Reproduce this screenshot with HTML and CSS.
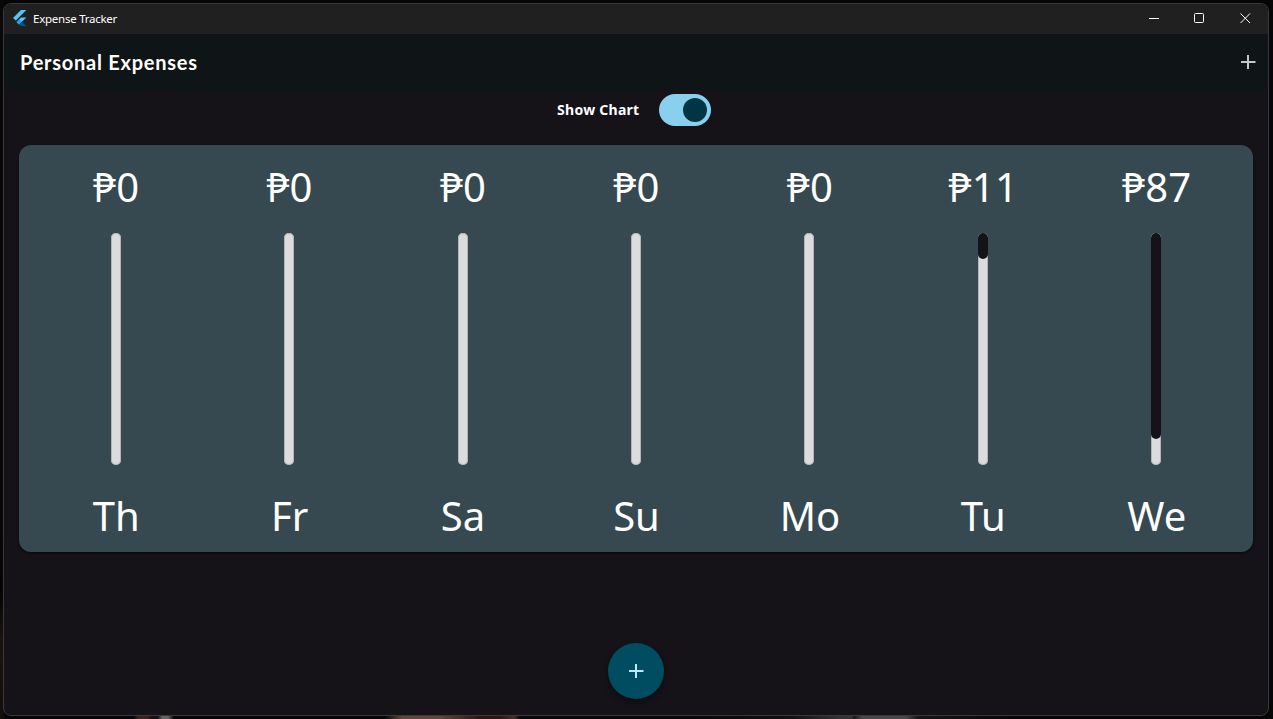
FILE: index.html
```
<!DOCTYPE html>
<html lang="en">
<head>
<meta charset="utf-8">
<title>Expense Tracker</title>
<link rel="stylesheet" href="styles.css">
</head>
<body>
<div class="window">
  <header class="titlebar">
    <svg class="logo" width="14" height="16" viewBox="0 0 14 16">
      <path fill="#54c5f8" d="M8 0h5.4L2.8 10.6 0 8z"/>
      <path fill="#54c5f8" d="M8 7.4h5.4L8.6 12.1 5.9 9.5z"/>
      <path fill="#29a3e8" d="M3.3 12.1l2.7-2.7 2.7 2.7L6 14.8z"/>
      <path fill="#01579b" d="M6 14.8l2.7-2.7 4.7 3.9H8z"/>
    </svg>
    <span class="app-name">Expense Tracker</span>
    <div class="controls">
      <svg width="46" height="30" viewBox="0 0 46 30"><path d="M18 14.5h10" /></svg>
      <svg width="46" height="30" viewBox="0 0 46 30"><rect x="17.5" y="9.5" width="9" height="9" rx="1"/></svg>
      <svg width="45" height="30" viewBox="0 0 45 30"><path d="M17.5 9.5l9.5 9.5M27 9.5l-9.5 9.5"/></svg>
    </div>
  </header>
  <div class="appbar">
    <h1 class="heading">Personal Expenses</h1>
    <svg class="add" width="24" height="24" viewBox="0 0 24 24"><path d="M19.5 13H13v6h-2v-6H5v-2h6V5h2v6h6.5z"/></svg>
  </div>
  <main class="content">
    <div class="toggle-row">
      <span class="toggle-label">Show Chart</span>
      <span class="switch"><span class="thumb"></span></span>
    </div>
    <section class="chart">
      <div class="day"><span class="amount">₱0</span><div class="bar"></div><span class="name">Th</span></div>
      <div class="day"><span class="amount">₱0</span><div class="bar"></div><span class="name">Fr</span></div>
      <div class="day"><span class="amount">₱0</span><div class="bar"></div><span class="name">Sa</span></div>
      <div class="day"><span class="amount">₱0</span><div class="bar"></div><span class="name">Su</span></div>
      <div class="day"><span class="amount">₱0</span><div class="bar"></div><span class="name">Mo</span></div>
      <div class="day"><span class="amount">₱11</span><div class="bar"><div class="fill" style="height:11.2%"></div></div><span class="name">Tu</span></div>
      <div class="day"><span class="amount">₱87</span><div class="bar"><div class="fill" style="height:88.8%"></div></div><span class="name">We</span></div>
    </section>
    <div class="fab"><svg width="24" height="24" viewBox="0 0 24 24"><path d="M19.5 13H13v6h-2v-6H5v-2h6V5h2v6h6.5z"/></svg></div>
  </main>
</div>
</body>
</html>
```
FILE: styles.css
```
* { box-sizing: border-box; }
body {
  margin: 0;
  padding: 3px 4px 3px 3px;
  height: 719px;
  overflow: hidden;
  color: #fff;
  font-family: "Noto Sans", "Open Sans", sans-serif;
  background:
    linear-gradient(90deg, transparent 134px, #3d2320 138px 147px, #151010 152px 158px, #686362 162px 168px, transparent 174px 384px, #5e463b 402px 440px, #2d1712 480px 500px, #43302a 514px, #080808 520px 690px, #111 790px, #333 840px 852px, #181818 854px, #484848 862px 906px, #171717 918px, transparent 1020px) 0 100% / 100% 4px no-repeat,
    linear-gradient(#080808, #080808 530px, #050303 590px, #1a1310 640px, #130e0b) 0 0 / 4px 100% no-repeat,
    #060606;
}
.window {
  width: 1266px;
  height: 713px;
  display: flex;
  flex-direction: column;
  border: 1px solid #393939;
  border-radius: 8px;
  overflow: hidden;
  background: #151218;
}
.titlebar {
  height: 30px;
  flex: none;
  display: flex;
  align-items: center;
  padding-left: 9px;
  background: #202020;
}
.logo { margin-right: 6px; margin-top: -2px; }
.app-name {
  font-size: 11.5px;
  line-height: 16px;
  letter-spacing: -0.25px;
}
.controls { display: flex; margin-left: auto; }
.controls svg { fill: none; stroke: #fff; stroke-width: 1; }
.appbar {
  height: 56px;
  flex: none;
  display: flex;
  align-items: center;
  justify-content: space-between;
  padding: 0 8px 0 16px;
  background: #0f1416;
}
.heading {
  margin: 0;
  font: 700 20px/28px Lato, sans-serif;
  letter-spacing: 0.74px;
}
.add { fill: #bfc8cc; }
.content {
  flex: 1;
  display: flex;
  flex-direction: column;
  align-items: center;
  padding: 0 15px;
}
.toggle-row {
  height: 40px;
  display: flex;
  align-items: center;
  gap: 19.5px;
  padding-right: 4px;
}
.toggle-label {
  font-size: 14px;
  font-weight: 700;
  line-height: 20px;
  letter-spacing: 0.27px;
}
.switch {
  width: 52px;
  height: 32px;
  padding: 4px;
  display: flex;
  justify-content: flex-end;
  border-radius: 16px;
  background: #88d0ee;
}
.thumb { width: 24px; height: 24px; border-radius: 50%; background: #003544; }
.chart {
  width: 1234px;
  height: 407px;
  margin-top: 15px;
  padding: 0 10px;
  display: grid;
  grid-template-columns: repeat(7, 1fr);
  border-radius: 12px;
  background: #364951;
  box-shadow: 0 1px 3px rgba(0, 0, 0, .6);
}
.day {
  display: flex;
  flex-direction: column;
  align-items: center;
  padding-top: 14px;
}
.amount, .name {
  font-size: 40px;
  line-height: 56px;
  white-space: nowrap;
}
.amount { letter-spacing: 0.3px; padding-left: 1px; }
.name { padding-left: 1px; }
.bar {
  width: 10px;
  height: 232px;
  margin: 18px 0 23px;
  border-radius: 5px;
  background: #dcdcdc;
  box-shadow: inset 0 0 0 1px #b4b4b4;
}
.fill { border-radius: 5px; background: #151218; }
.fab {
  width: 56px;
  height: 56px;
  margin-top: 91px;
  display: flex;
  align-items: center;
  justify-content: center;
  border-radius: 50%;
  background: #004d62;
  box-shadow: 0 3px 6px rgba(0, 0, 0, .35);
}
.fab svg { fill: #bbe9ff; }
```
